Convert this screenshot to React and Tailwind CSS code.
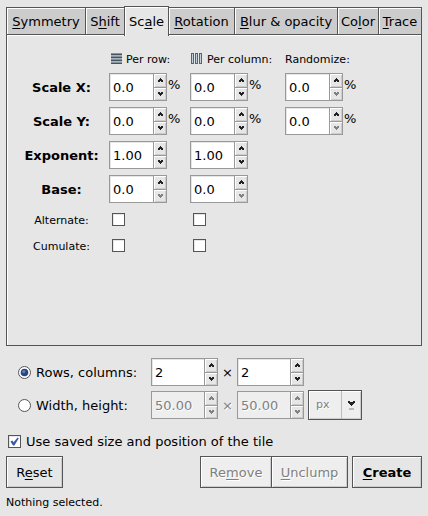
import React from 'react';

const tabs = [
  { before: '', key: 'S', after: 'ymmetry' },
  { before: 'S', key: 'h', after: 'ift' },
  { before: 'Sc', key: 'a', after: 'le', active: true },
  { before: '', key: 'R', after: 'otation' },
  { before: '', key: 'B', after: 'lur & opacity' },
  { before: 'Co', key: 'l', after: 'or' },
  { before: '', key: 'T', after: 'race' },
];

const rows = [
  { label: 'Scale X:', value: '0.0', percent: true, random: true },
  { label: 'Scale Y:', value: '0.0', percent: true, random: true },
  { label: 'Exponent:', value: '1.00' },
  { label: 'Base:', value: '0.0', atMin: true },
];

const Mnemonic = ({ before = '', letter, after }) => (
  <span className="whitespace-pre">
    {before}
    <span className="underline underline-offset-2 [text-decoration-skip-ink:none]">{letter}</span>
    {after}
  </span>
);

const Arrow = ({ down, dim }) => (
  <svg viewBox="0 0 5 4" className={`h-1 w-[5px] ${dim ? 'text-[#808080]' : 'text-[#222]'}`} fill="currentColor" shapeRendering="crispEdges">
    {down ? (
      <path d="M0 0h2v1h1v-1h2v2h-1v1h-1v1h-1v-1h-1v-1h-1z" />
    ) : (
      <path d="M2 0h1v1h1v1h1v2h-2v-1h-1v1h-2v-2h1v-1h1z" />
    )}
  </svg>
);

const Spin = ({ label, value, width = 'w-[58px]', disabled, atMin }) => {
  const button = 'flex flex-1 items-center justify-center bg-[#e6e6e6] shadow-[inset_1px_1px_0_#fff,inset_-1px_-1px_0_#ccc]';
  return (
    <div className={`flex h-7 shrink-0 border border-[#999] ${width}`}>
      <input
        type="text"
        aria-label={label}
        defaultValue={value}
        disabled={disabled}
        className={`min-w-0 flex-1 pt-0.5 pl-[3px] outline-none ${
          disabled ? 'bg-[#eee] text-[#808080] [text-shadow:1px_1px_0_#fff]' : 'bg-white text-black shadow-[inset_1px_1px_0_#e6e6e6]'
        }`}
      />
      <div className="flex w-[13px] flex-col border-l border-[#999]">
        <button type="button" aria-label={`Increase ${label}`} disabled={disabled} className={button}>
          <Arrow dim={disabled} />
        </button>
        <div className="h-px bg-[#999]" />
        <button type="button" aria-label={`Decrease ${label}`} disabled={disabled || atMin} className={button}>
          <Arrow down dim={disabled || atMin} />
        </button>
      </div>
    </div>
  );
};

const Check = ({ id, label, checked }) => (
  <span className="relative flex size-[13px] shrink-0">
    <input
      id={id}
      type="checkbox"
      aria-label={label}
      defaultChecked={checked}
      className="peer size-[13px] appearance-none border border-[#555] bg-white shadow-[inset_1px_1px_0_#e6e6e6]"
    />
    <svg viewBox="0 0 13 13" className="pointer-events-none absolute inset-0 hidden peer-checked:block" fill="#3a5ba8">
      <path d="M2.4 6.4 4.4 5.4 5.6 7.2 9.6 2.6 10.8 3.2 6.4 10.4H5Z" />
    </svg>
  </span>
);

const Radio = ({ id, checked }) => (
  <span className="relative flex size-[13px] shrink-0">
    <input
      id={id}
      type="radio"
      name="layout"
      defaultChecked={checked}
      className="peer size-[13px] appearance-none rounded-full border border-[#555] bg-white"
    />
    <svg viewBox="0 0 13 13" className="pointer-events-none absolute inset-0 hidden peer-checked:block">
      <circle cx="6.5" cy="6.5" r="3.8" fill="#2a4480" />
      <circle cx="5.8" cy="5.6" r="1.6" fill="#5f7fbf" />
    </svg>
  </span>
);

const RowsIcon = () => (
  <svg viewBox="0 0 12 12" className="size-3" shapeRendering="crispEdges">
    <rect x="1" y="0" width="11" height="11" fill="#a7b4c2" />
    {[0, 3, 6, 9].map((y) => (
      <rect key={y} x="1" y={y + 1} width="11" height="1" fill="#4a525b" />
    ))}
    <path d="M1 0h11M1 3.5h11M1 6.5h11M1 9.5h11" stroke="#8793a0" />
  </svg>
);

const ColumnsIcon = () => (
  <svg viewBox="0 0 12 12" className="size-3" shapeRendering="crispEdges">
    {[0, 4, 8].map((x) => (
      <g key={x}>
        <rect x={x} y="0" width="3" height="11" fill="#59636f" />
        <rect x={x + 1} y="1" width="1" height="9" fill="#c3d0de" />
      </g>
    ))}
  </svg>
);

const Button = ({ className = '', disabled, children }) => (
  <button
    type="button"
    disabled={disabled}
    className={`h-8 border border-[#555] pt-0.5 shadow-[inset_1px_1px_0_#fff,inset_-1px_-1px_0_#ccc] ${
      disabled ? 'bg-[#eee] text-[#808080] [text-shadow:1px_1px_0_#fff]' : 'bg-[#e6e6e6]'
    } ${className}`}
  >
    {children}
  </button>
);

const App = () => {
  return (
    <main className="min-h-screen bg-[#e6e6e6] px-[6px] pt-[6px] font-['DejaVu_Sans',sans-serif] text-[13px] leading-4 text-black">
      <div role="tablist" className="grid h-[29px] grid-cols-[79fr_39fr_44fr_66fr_103fr_41fr_44fr]">
        {tabs.map((tab) => (
          <button
            key={tab.after}
            type="button"
            role="tab"
            aria-selected={!!tab.active}
            className={
              tab.active
                ? 'relative z-10 -mr-px -mb-px border-x border-t border-[#555] bg-[#e6e6e6] pt-px shadow-[inset_1px_1px_0_#fff]'
                : 'mt-px border-y border-l border-[#555] bg-[#ccc] pt-0.5 shadow-[inset_1px_1px_0_#fff] last:border-r'
            }
          >
            <Mnemonic before={tab.before} letter={tab.key} after={tab.after} />
          </button>
        ))}
      </div>

      <section className="min-h-[311px] border-x border-b border-[#555] pt-3 pl-[15px] shadow-[inset_1px_1px_0_#fff]">
        <div className="grid grid-cols-[87px_81px_95px_auto] gap-y-[6px]">
          <div className="col-start-2 flex h-5 items-center gap-1 pt-1 pl-px text-[11px] whitespace-nowrap">
            <RowsIcon />
            <span className="pt-px">Per row:</span>
          </div>
          <div className="flex h-5 items-center gap-1 pt-1 pl-px text-[11px] whitespace-nowrap">
            <ColumnsIcon />
            <span className="pt-px">Per column:</span>
          </div>
          <div className="flex h-5 items-center pt-[5px] text-[11px]">Randomize:</div>

          {rows.map((row) => (
            <React.Fragment key={row.label}>
              <div className="flex items-center justify-center pt-0.5 pr-2 font-bold">{row.label}</div>
              <div className="flex gap-px">
                <Spin label={`${row.label} per row`} value={row.value} atMin={row.atMin} />
                {row.percent && <span className="pt-1">%</span>}
              </div>
              <div className="flex gap-px">
                <Spin label={`${row.label} per column`} value={row.value} atMin={row.atMin} />
                {row.percent && <span className="pt-1">%</span>}
              </div>
              <div className="flex gap-px">
                {row.random && (
                  <>
                    <Spin label={`${row.label} randomize`} value="0.0" atMin />
                    <span className="pt-1">%</span>
                  </>
                )}
              </div>
            </React.Fragment>
          ))}

          {['Alternate:', 'Cumulate:'].map((label) => (
            <React.Fragment key={label}>
              <div className="flex h-5 items-center justify-center pt-1 pr-2 text-[11px]">{label}</div>
              <div className="pt-1 pl-[3px]">
                <Check label={`${label} per row`} />
              </div>
              <div className="pt-1 pl-[3px]">
                <Check label={`${label} per column`} />
              </div>
              <div />
            </React.Fragment>
          ))}
        </div>
      </section>

      <div className="mt-3 grid grid-cols-[133px_auto] items-center gap-y-1 pl-3">
        <div className="flex items-center gap-[5px]">
          <Radio id="by-count" checked />
          <label htmlFor="by-count" className="pt-0.5 whitespace-nowrap">Rows, columns:</label>
        </div>
        <div className="flex h-7 items-center">
          <Spin label="Rows" value="2" width="w-[67px]" />
          <span className="w-[19px] pt-0.5 text-center">×</span>
          <Spin label="Columns" value="2" width="w-[67px]" />
        </div>
        <div className="flex items-center gap-[5px]">
          <Radio id="by-size" />
          <label htmlFor="by-size" className="pt-0.5 whitespace-nowrap">Width, height:</label>
        </div>
        <div className="flex h-[30px] items-center">
          <Spin label="Width" value="50.00" width="w-[67px]" disabled />
          <span className="w-[19px] pt-0.5 text-center text-[#808080] [text-shadow:1px_1px_0_#fff]">×</span>
          <Spin label="Height" value="50.00" width="w-[67px]" disabled />
          <div className="relative ml-1 h-[30px] w-[54px]">
            <select
              aria-label="Unit"
              disabled
              className="size-full appearance-none border border-[#555] bg-[#eee] pl-[7px] text-[11px] text-[#808080] opacity-100 shadow-[inset_1px_1px_0_#fff,inset_-1px_-1px_0_#ccc] [text-shadow:1px_1px_0_#fff]"
            >
              <option>px</option>
            </select>
            <div className="pointer-events-none absolute inset-y-px right-px flex w-5 items-center justify-center border-l border-[#bbb]">
              <svg viewBox="0 0 7 9" className="h-[9px] w-[7px]" shapeRendering="crispEdges">
                <path d="M0 0h2v1h3v-1h2v2h-1v1h-1v1h-1v1h-1v-1h-1v-1h-1v-1h-1z" fill="#222" />
                <rect x="1" y="7" width="5" height="2" fill="#bbb" />
              </svg>
            </div>
          </div>
        </div>
      </div>

      <div className="mt-3 flex h-[18px] items-center gap-[5px] pl-0.5">
        <Check id="saved" label="Use saved size and position of the tile" checked />
        <label htmlFor="saved" className="pt-px">Use saved size and position of the tile</label>
      </div>

      <div className="mt-[6px] flex">
        <Button className="w-[57px]">
          <Mnemonic before="R" letter="e" after="set" />
        </Button>
        <Button disabled className="ml-auto w-[72px]">
          <Mnemonic before="Re" letter="m" after="ove" />
        </Button>
        <Button disabled className="-ml-px w-[77px]">
          <Mnemonic letter="U" after="nclump" />
        </Button>
        <Button className="ml-1 w-[70px] font-bold">
          <Mnemonic letter="C" after="reate" />
        </Button>
      </div>

      <p className="mt-[7px] text-[11px]">Nothing selected.</p>
    </main>
  );
};

export default App;
